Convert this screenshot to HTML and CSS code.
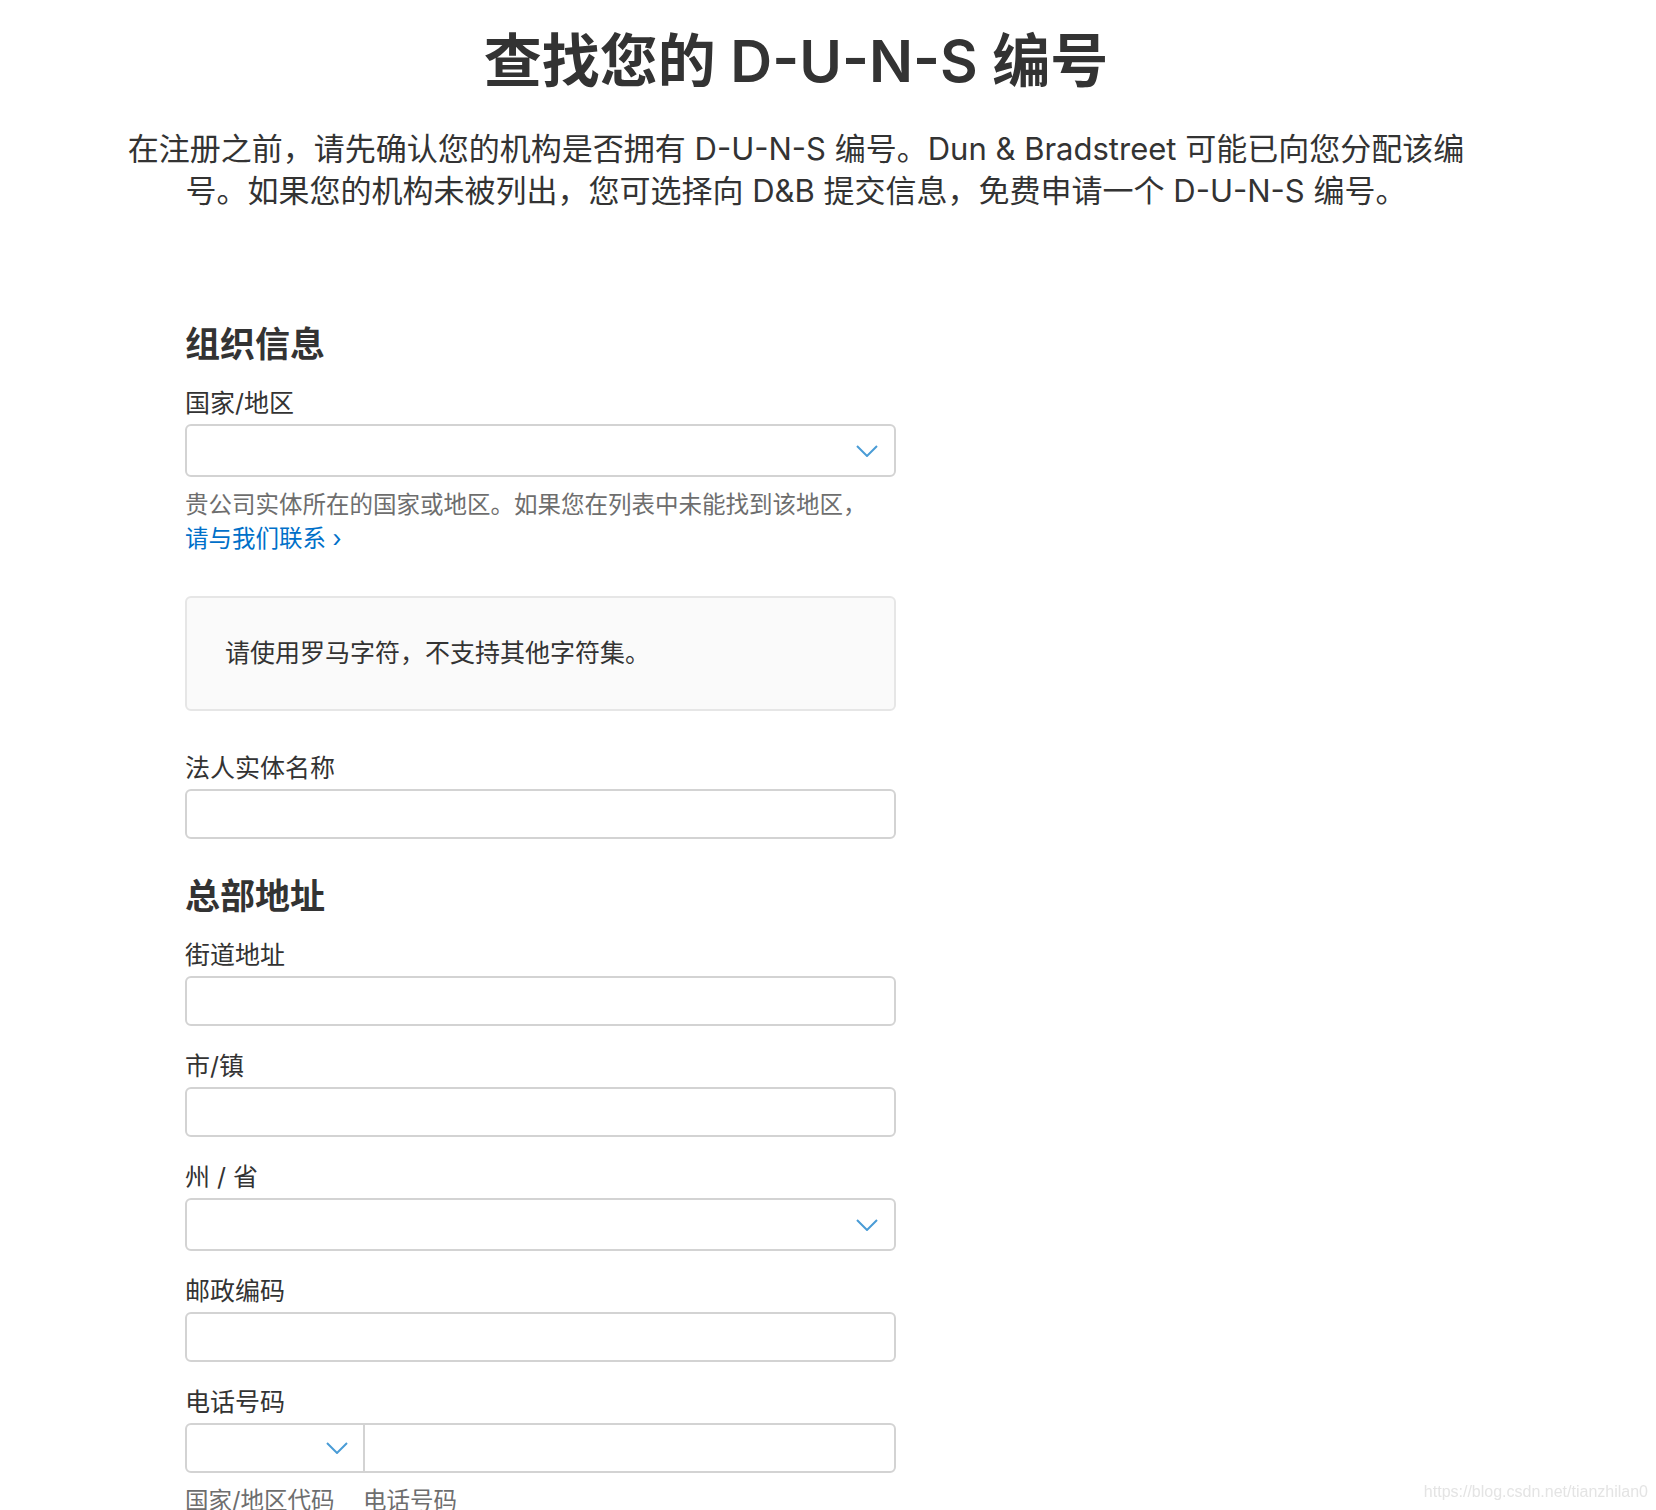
FILE: index.html
```
<!DOCTYPE html>
<html lang="zh-CN">
<head>
    <meta charset="UTF-8">
    <meta name="viewport" content="width=device-width, initial-scale=1.0">
    <title>查找您的 D-U-N-S 编号</title>
    <link rel="stylesheet" href="styles.css">
</head>
<body>
<div class="page">
    <h1 class="page-title">查找您的 D-U-N-S 编号</h1>
    <p class="intro">在注册之前，请先确认您的机构是否拥有 D-U-N-S 编号。Dun &amp; Bradstreet 可能已向您分配该编号。如果您的机构未被列出，您可选择向 D&amp;B 提交信息，免费申请一个 D-U-N-S 编号。</p>

    <form class="duns-form">
        <h2 class="section-title">组织信息</h2>

        <div class="field">
            <label for="country">国家/地区</label>
            <div class="select-wrap">
                <select id="country"><option></option></select>
                <svg class="chevron" width="22" height="12" viewBox="0 0 22 12"><path d="M1 1 L11 11 L21 1"/></svg>
            </div>
            <p class="hint">贵公司实体所在的国家或地区。如果您在列表中未能找到该地区，<br><a href="#">请与我们联系 ›</a></p>
        </div>

        <div class="notice">请使用罗马字符，不支持其他字符集。</div>

        <div class="field after-notice">
            <label for="legalName">法人实体名称</label>
            <input type="text" id="legalName">
        </div>

        <h2 class="section-title address">总部地址</h2>

        <div class="field first">
            <label for="street">街道地址</label>
            <input type="text" id="street">
        </div>

        <div class="field">
            <label for="city">市/镇</label>
            <input type="text" id="city">
        </div>

        <div class="field">
            <label for="state">州 / 省</label>
            <div class="select-wrap">
                <select id="state"><option></option></select>
                <svg class="chevron" width="22" height="12" viewBox="0 0 22 12"><path d="M1 1 L11 11 L21 1"/></svg>
            </div>
        </div>

        <div class="field">
            <label for="zip">邮政编码</label>
            <input type="text" id="zip">
        </div>

        <div class="field">
            <label for="phone">电话号码</label>
            <div class="phone-row">
                <div class="select-wrap code">
                    <select id="phoneCode"><option></option></select>
                    <svg class="chevron" width="22" height="12" viewBox="0 0 22 12"><path d="M1 1 L11 11 L21 1"/></svg>
                </div>
                <input type="text" id="phone">
            </div>
            <div class="phone-hints">
                <span>国家/地区代码</span>
                <span>电话号码</span>
            </div>
        </div>
    </form>
</div>

<div class="watermark">https://blog.csdn.net/tianzhilan0</div>
</body>
</html>
```

FILE: styles.css
```
body {
    margin: 0;
    background: #fff;
    color: #333;
    font-family: "Inter", "Noto Sans CJK SC", sans-serif;
}

.page {
    width: 1350px;
    margin-left: 121px;
}

.page-title {
    margin: 29px 0 0;
    font-size: 58px;
    line-height: 65px;
    font-weight: 600;
    text-align: center;
}

.intro {
    margin: 34px 0 0;
    font-size: 31px;
    line-height: 42px;
    text-align: center;
}

.duns-form {
    width: 711px;
    margin-left: 64px;
}

.section-title {
    margin: 111px 0 21px;
    font-size: 35px;
    line-height: 42px;
    font-weight: 600;
}

.section-title.address {
    margin-top: 36px;
}

.field {
    margin-top: 23px;
}

.section-title + .field {
    margin-top: 0;
}

.field label {
    display: block;
    font-size: 25px;
    line-height: 35px;
    margin-bottom: 3px;
}

.field input,
.field select {
    display: block;
    box-sizing: border-box;
    width: 100%;
    height: 50px;
    margin: 0;
    padding: 0 16px;
    border: 2px solid #d3d3d3;
    border-radius: 6px;
    background: #fff;
    font: inherit;
    font-size: 25px;
    color: #333;
    outline: none;
    -webkit-appearance: none;
    appearance: none;
}

.select-wrap {
    position: relative;
}

.field .select-wrap select {
    height: 53px;
}

.chevron {
    position: absolute;
    right: 18px;
    top: 50%;
    margin-top: -6px;
    fill: none;
    stroke: #4a9cd6;
    stroke-width: 2;
}

.hint {
    margin: 11px 0 0;
    font-size: 23.5px;
    line-height: 34px;
    color: #6e6e6e;
}

.hint a {
    color: #0070c9;
    text-decoration: none;
}

.notice {
    margin-top: 40px;
    padding: 38px 38px;
    border: 2px solid #e6e6e6;
    border-radius: 6px;
    background: #fafafa;
    font-size: 25px;
    line-height: 35px;
}

.field.after-notice {
    margin-top: 40px;
}

.phone-row {
    display: flex;
    height: 50px;
    box-sizing: border-box;
    border: 2px solid #d3d3d3;
    border-radius: 6px;
}

.phone-row .select-wrap {
    width: 176px;
    border-right: 2px solid #d3d3d3;
}

.field .phone-row select,
.field .phone-row input {
    height: 46px;
    border: 0;
    border-radius: 0;
    background: transparent;
}

.phone-row input {
    flex: 1;
}

.phone-row .chevron {
    right: 15px;
}

.phone-hints {
    display: grid;
    grid-template-columns: 178px 1fr;
    margin-top: 11px;
    font-size: 23.5px;
    line-height: 34px;
    color: #6e6e6e;
}

.watermark {
    position: fixed;
    right: 8px;
    bottom: 9px;
    font-family: "Liberation Sans", sans-serif;
    font-size: 16px;
    color: #e4e4e4;
}
```
